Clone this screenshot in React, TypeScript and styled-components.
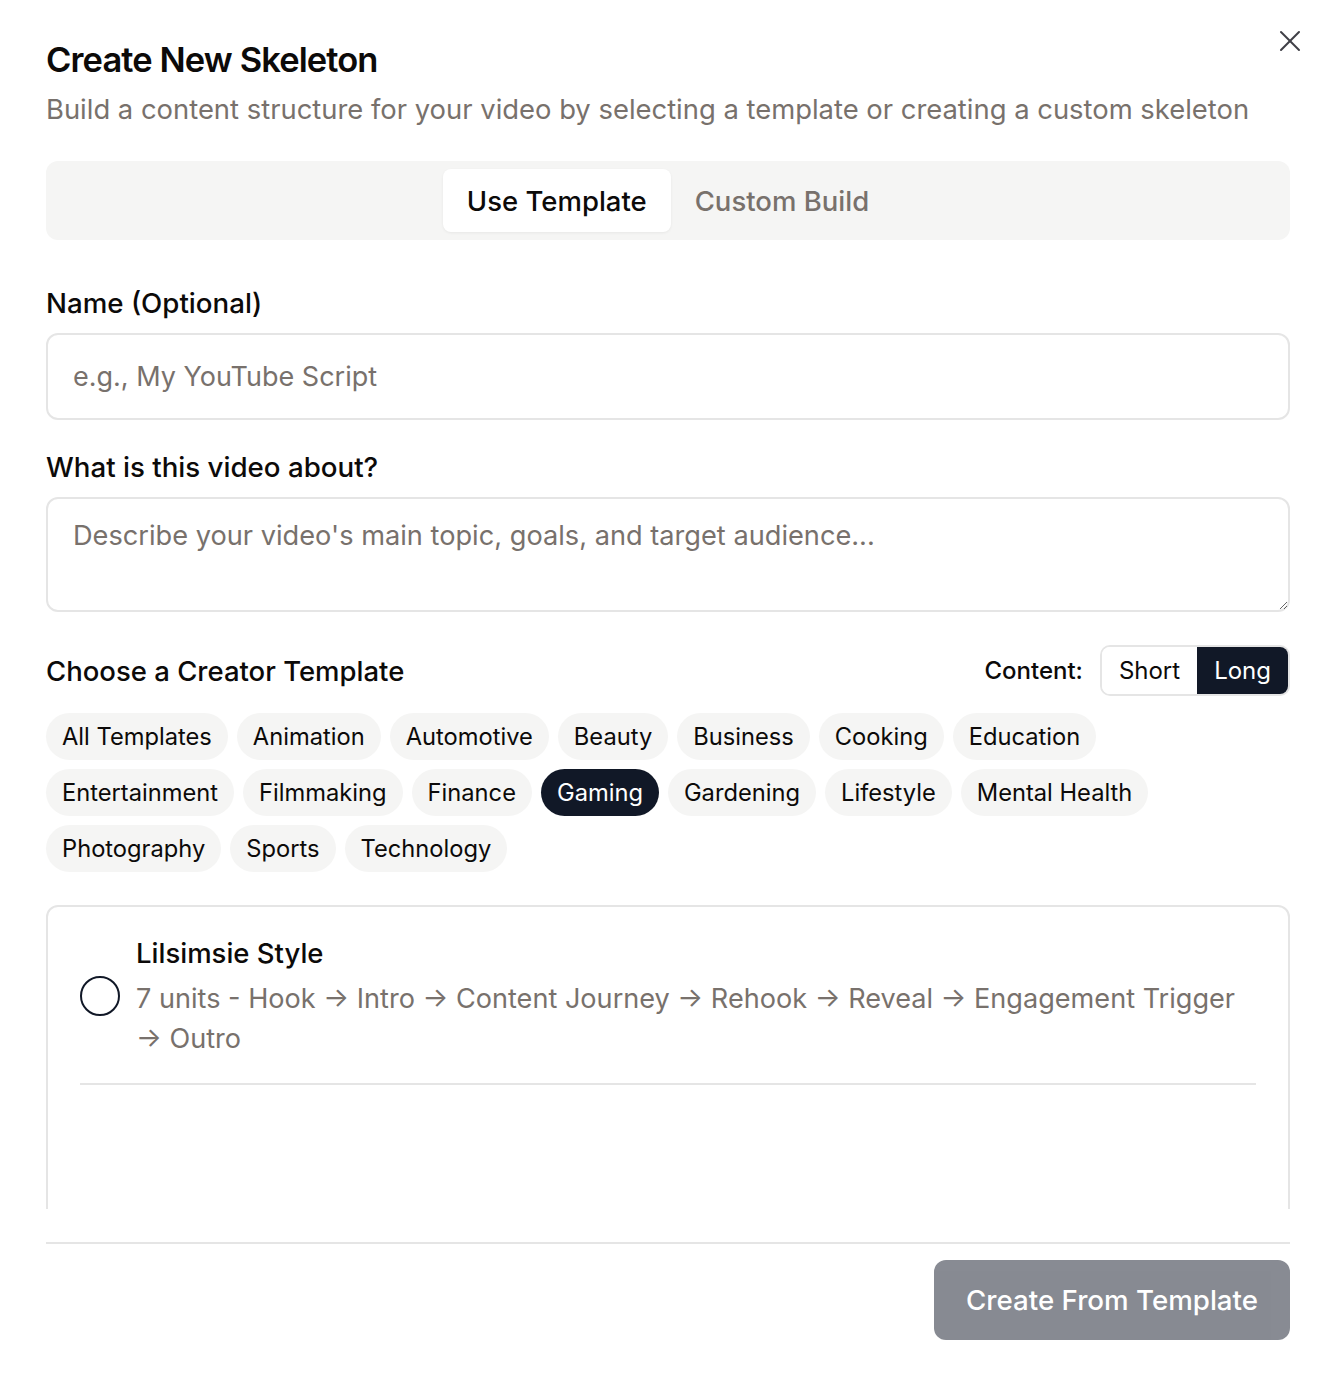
import { useState } from "react";
import styled, { createGlobalStyle } from "styled-components";

const COLOR = {
  INK: "#0c0a09",
  NAVY: "#111827",
  MUTED: "#78716c",
  BORDER: "#e5e5e5",
  CHIP: "#f5f5f4",
};

const CATEGORIES = [
  "All Templates",
  "Animation",
  "Automotive",
  "Beauty",
  "Business",
  "Cooking",
  "Education",
  "Entertainment",
  "Filmmaking",
  "Finance",
  "Gaming",
  "Gardening",
  "Lifestyle",
  "Mental Health",
  "Photography",
  "Sports",
  "Technology",
];

const GlobalStyle = createGlobalStyle`
  body {
    margin: 0;
    background: #ffffff;
    font-family: Inter, "Noto Sans", "Liberation Sans", sans-serif;
    color: ${COLOR.INK};
  }
  * { box-sizing: border-box; }
`;

export default function App() {
  const [tab, setTab] = useState("template");
  const [length, setLength] = useState("long");
  const [category, setCategory] = useState("Gaming");

  return (
    <>
      <GlobalStyle />
      <Dialog>
        <CloseButton aria-label="Close">
          <svg width="36" height="36" viewBox="0 0 24 24" fill="none" stroke="#3f3f46" strokeWidth="1.35" strokeLinecap="round">
            <path d="M18 6 6 18" />
            <path d="m6 6 12 12" />
          </svg>
        </CloseButton>
        <Title>Create New Skeleton</Title>
        <Subtitle>
          Build a content structure for your video by selecting a template or creating a custom skeleton
        </Subtitle>

        <TabBar>
          <Tab $active={tab === "template"} onClick={() => setTab("template")}>Use Template</Tab>
          <Tab $active={tab === "custom"} onClick={() => setTab("custom")}>Custom Build</Tab>
        </TabBar>

        <Label>Name (Optional)</Label>
        <TextInput placeholder="e.g., My YouTube Script" />

        <Label $gap={31}>What is this video about?</Label>
        <TextArea placeholder="Describe your video's main topic, goals, and target audience..." />

        <SectionHead>
          <SectionTitle>Choose a Creator Template</SectionTitle>
          <LengthPicker>
            <LengthLabel>Content:</LengthLabel>
            <Segmented>
              <Segment $active={length === "short"} onClick={() => setLength("short")}>Short</Segment>
              <Segment $active={length === "long"} onClick={() => setLength("long")}>Long</Segment>
            </Segmented>
          </LengthPicker>
        </SectionHead>

        <Chips>
          {CATEGORIES.map((c) => (
            <Chip key={c} $active={c === category} onClick={() => setCategory(c)}>
              {c}
            </Chip>
          ))}
        </Chips>

        <ScrollArea>
          <TemplateCard>
            <TemplateRow>
              <Radio />
              <TemplateText>
                <TemplateName>Lilsimsie Style</TemplateName>
                <TemplateDesc>
                  7 units - Hook → Intro → Content Journey → Rehook → Reveal → Engagement Trigger → Outro
                </TemplateDesc>
              </TemplateText>
            </TemplateRow>
          </TemplateCard>
        </ScrollArea>

        <Footer>
          <PrimaryButton disabled>Create From Template</PrimaryButton>
        </Footer>
      </Dialog>
    </>
  );
}

const Dialog = styled.div`
  position: relative;
  width: 1336px;
  height: 1378px;
  padding: 39px 46px 0;
  display: flex;
  flex-direction: column;
  background: #fff;
`;
const CloseButton = styled.button`
  position: absolute;
  top: 23px;
  right: 28px;
  border: none;
  background: none;
  padding: 0;
  display: flex;
  cursor: pointer;
`;
const Title = styled.h2`
  margin: 0;
  font-size: 34.5px;
  line-height: 42px;
  font-weight: 600;
  letter-spacing: -0.9px;
`;
const Subtitle = styled.p`
  margin: 14px 0 0;
  font-size: 27.4px;
  line-height: 28px;
  color: ${COLOR.MUTED};
`;
const TabBar = styled.div`
  margin-top: 38px;
  height: 79px;
  padding: 8px;
  border-radius: 12px;
  background: ${COLOR.CHIP};
  display: flex;
  justify-content: center;
`;
const Tab = styled.button<{ $active: boolean }>`
  border: none;
  padding: 0 24px;
  border-radius: 8px;
  font-family: inherit;
  font-size: 27.5px;
  font-weight: 500;
  cursor: pointer;
  color: ${(p) => (p.$active ? COLOR.INK : COLOR.MUTED)};
  background: ${(p) => (p.$active ? "#ffffff" : "transparent")};
  box-shadow: ${(p) => (p.$active ? "0 1px 3px rgba(0,0,0,0.06)" : "none")};
`;
const Label = styled.label<{ $gap?: number }>`
  display: block;
  margin-top: ${(p) => p.$gap ?? 47}px;
  font-size: 27.7px;
  line-height: 32px;
  font-weight: 500;
`;
const TextInput = styled.input`
  margin-top: 14px;
  height: 87px;
  width: 100%;
  padding: 0 25px;
  border: 2px solid ${COLOR.BORDER};
  border-radius: 12px;
  font-family: inherit;
  font-size: 27px;
  outline: none;
  &::placeholder {
    color: ${COLOR.MUTED};
  }
`;
const TextArea = styled.textarea`
  margin-top: 14px;
  height: 115px;
  width: 100%;
  padding: 20px 25px;
  border: 2px solid ${COLOR.BORDER};
  border-radius: 12px;
  font-family: inherit;
  font-size: 27.2px;
  line-height: 34px;
  outline: none;
  &::placeholder {
    color: ${COLOR.MUTED};
  }
`;
const SectionHead = styled.div`
  margin-top: 33px;
  display: flex;
  align-items: center;
  justify-content: space-between;
`;
const SectionTitle = styled.h3`
  margin: 0;
  font-size: 27.5px;
  font-weight: 500;
`;
const LengthPicker = styled.div`
  display: flex;
  align-items: center;
  gap: 17px;
`;
const LengthLabel = styled.span`
  font-size: 24px;
  font-weight: 500;
`;
const Segmented = styled.div`
  display: flex;
  height: 51px;
  border: 2px solid ${COLOR.BORDER};
  border-radius: 10px;
  overflow: hidden;
`;
const Segment = styled.button<{ $active: boolean }>`
  border: none;
  padding: 0 17px;
  font-family: inherit;
  font-size: 24px;
  cursor: pointer;
  color: ${(p) => (p.$active ? "#ffffff" : COLOR.INK)};
  background: ${(p) => (p.$active ? COLOR.NAVY : "#ffffff")};
`;
const Chips = styled.div`
  margin-top: 17px;
  display: flex;
  flex-wrap: wrap;
  gap: 9px;
`;
const Chip = styled.button<{ $active: boolean }>`
  height: 47px;
  padding: 0 16px;
  border: none;
  border-radius: 999px;
  font-family: inherit;
  font-size: 23.7px;
  cursor: pointer;
  color: ${(p) => (p.$active ? "#ffffff" : COLOR.INK)};
  background: ${(p) => (p.$active ? COLOR.NAVY : COLOR.CHIP)};
`;
const ScrollArea = styled.div`
  margin-top: 33px;
  height: 304px;
  overflow: hidden;
`;
const TemplateCard = styled.div`
  height: 420px;
  border: 2px solid ${COLOR.BORDER};
  border-radius: 12px;
  padding: 26px 32px;
`;
const TemplateRow = styled.div`
  display: flex;
  align-items: center;
  gap: 16px;
  padding-bottom: 24px;
  border-bottom: 2px solid ${COLOR.BORDER};
`;
const Radio = styled.span`
  flex: none;
  width: 40px;
  height: 40px;
  border: 2px solid ${COLOR.NAVY};
  border-radius: 50%;
`;
const TemplateText = styled.div`
  display: flex;
  flex-direction: column;
  gap: 6px;
`;
const TemplateName = styled.div`
  font-size: 27.5px;
  font-weight: 500;
  line-height: 40px;
`;
const TemplateDesc = styled.div`
  font-size: 27.1px;
  line-height: 40px;
  color: ${COLOR.MUTED};
`;
const Footer = styled.div`
  margin-top: 33px;
  padding-top: 16px;
  border-top: 2px solid ${COLOR.BORDER};
  display: flex;
  justify-content: flex-end;
`;
const PrimaryButton = styled.button`
  height: 80px;
  padding: 0 32px;
  border: none;
  border-radius: 12px;
  font-family: inherit;
  font-size: 27.7px;
  font-weight: 500;
  color: #ffffff;
  background: ${COLOR.NAVY};
  &:disabled {
    opacity: 0.5;
  }
`;
